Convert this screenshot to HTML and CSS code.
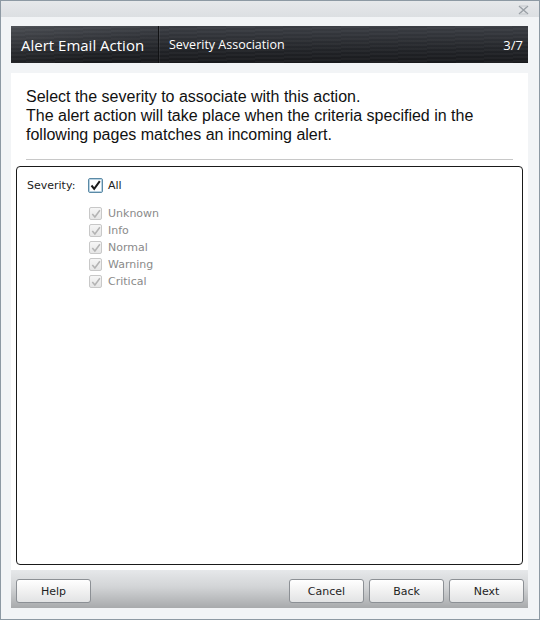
FILE: index.html
```html
<!DOCTYPE html>
<html lang="en">
<head>
    <meta charset="UTF-8">
    <title>Alert Email Action</title>
    <link rel="stylesheet" href="styles.css">
</head>
<body>
    <div class="window">
        <div class="titlebar">
            <svg class="close" width="11" height="10" viewBox="0 0 11 10">
                <path d="M1 1 L10 9 M10 1 L1 9" stroke="#9aa0a6" stroke-width="1.4" fill="none"/>
                <path d="M2 1 L9 1 M2 9 L9 9" stroke="#c4c8cc" stroke-width="1" fill="none"/>
            </svg>
        </div>

        <div class="frame">
            <div class="header">
                <div class="header-title">Alert Email Action</div>
                <div class="header-step">Severity Association</div>
                <div class="header-count">3/7</div>
            </div>

            <div class="panel">
                <p class="intro">
                    Select the severity to associate with this action.<br>
                    The alert action will take place when the criteria specified in the
                    following pages matches an incoming alert.
                </p>
                <div class="separator"></div>

                <div class="box">
                    <div class="severity-row">
                        <span class="field-label">Severity:</span>
                        <div class="options">
                            <label class="check main">
                                <span class="box-check focused">
                                    <svg width="11" height="11" viewBox="0 0 11 11"><path d="M1.5 5.5 L4.2 8.8 L9.8 1.2" stroke="#1b1b1b" stroke-width="2" fill="none"/></svg>
                                </span>
                                All
                            </label>
                            <div class="sub-list">
                                <label class="check disabled"><span class="box-check"><svg width="10" height="10" viewBox="0 0 10 10"><path d="M1.3 5 L3.9 8 L8.9 1.2" stroke="#b4b4b4" stroke-width="1.6" fill="none"/></svg></span>Unknown</label>
                                <label class="check disabled"><span class="box-check"><svg width="10" height="10" viewBox="0 0 10 10"><path d="M1.3 5 L3.9 8 L8.9 1.2" stroke="#b4b4b4" stroke-width="1.6" fill="none"/></svg></span>Info</label>
                                <label class="check disabled"><span class="box-check"><svg width="10" height="10" viewBox="0 0 10 10"><path d="M1.3 5 L3.9 8 L8.9 1.2" stroke="#b4b4b4" stroke-width="1.6" fill="none"/></svg></span>Normal</label>
                                <label class="check disabled"><span class="box-check"><svg width="10" height="10" viewBox="0 0 10 10"><path d="M1.3 5 L3.9 8 L8.9 1.2" stroke="#b4b4b4" stroke-width="1.6" fill="none"/></svg></span>Warning</label>
                                <label class="check disabled"><span class="box-check"><svg width="10" height="10" viewBox="0 0 10 10"><path d="M1.3 5 L3.9 8 L8.9 1.2" stroke="#b4b4b4" stroke-width="1.6" fill="none"/></svg></span>Critical</label>
                            </div>
                        </div>
                    </div>
                </div>
            </div>

            <div class="footer">
                <button class="btn">Help</button>
                <div class="footer-right">
                    <button class="btn">Cancel</button>
                    <button class="btn">Back</button>
                    <button class="btn">Next</button>
                </div>
            </div>
        </div>
    </div>
</body>
</html>
```

FILE: styles.css
```css
* {
    box-sizing: border-box;
}

body {
    margin: 0;
    background: #ffffff;
    font-family: 'DejaVu Sans', sans-serif;
}

.window {
    width: 540px;
    height: 620px;
    border: 1px solid #8d99a3;
    background: #f2f4f6;
    display: flex;
    flex-direction: column;
}

.titlebar {
    height: 16px;
    background: linear-gradient(#e6e8ea, #dcdfe2);
    display: flex;
    justify-content: flex-end;
    align-items: center;
    padding-right: 10px;
}

.close {
    display: block;
    margin-top: 1px;
}

.frame {
    flex: 1;
    padding: 9px 11px 11px 10px;
    display: flex;
    flex-direction: column;
}

.header {
    height: 37px;
    display: flex;
    align-items: center;
    color: #ffffff;
    background:
        linear-gradient(160deg, rgba(255,255,255,0.08) 0%, rgba(255,255,255,0) 28%),
        repeating-linear-gradient(178deg, rgba(255,255,255,0.03) 0 2px, rgba(0,0,0,0) 2px 4px),
        linear-gradient(#3b3e44, #202226 70%, #18191c);
}

.header-title {
    font-family: 'Open Sans', sans-serif;
    font-size: 15px;
    padding: 0 11px 0 10px;
    height: 100%;
    width: 148px;
    display: flex;
    align-items: center;
    border-right: 1px solid #111214;
    box-shadow: 1px 0 0 rgba(255,255,255,0.08);
    white-space: nowrap;
}

.header-step {
    font-family: 'Open Sans', sans-serif;
    font-size: 12.5px;
    padding-left: 10px;
    flex: 1;
}

.header-count {
    font-family: 'Open Sans', sans-serif;
    font-size: 13px;
    padding-right: 5px;
}

.panel {
    flex: 1;
    margin-top: 10px;
    background: #ffffff;
    display: flex;
    flex-direction: column;
    padding: 0 5px 5px;
}

.intro {
    font-family: 'Liberation Sans', sans-serif;
    font-size: 16px;
    line-height: 19px;
    color: #111111;
    margin: 14px 10px 0;
}

.separator {
    height: 1px;
    background: #c8c8c8;
    margin: 15px 10px 6px;
}

.box {
    flex: 1;
    border: 1px solid #1a1a1a;
    border-radius: 4px;
    padding: 10px 10px;
}

.severity-row {
    display: flex;
    font-size: 11px;
    color: #222222;
}

.field-label {
    width: 61px;
    padding-top: 2px;
}

.options {
    display: flex;
    flex-direction: column;
}

.check {
    display: flex;
    align-items: center;
    gap: 5px;
    height: 17px;
}

.check.main {
    height: 16px;
    margin-bottom: 12px;
}

.check.disabled {
    color: #8a8a8a;
    padding-left: 1px;
    gap: 6px;
}

.box-check {
    width: 13px;
    height: 13px;
    border: 1px solid #c8c8c8;
    background: linear-gradient(#f6f6f6, #e6e6e6);
    border-radius: 2px;
    display: flex;
    align-items: center;
    justify-content: center;
}

.box-check.focused {
    width: 15px;
    height: 15px;
    border: 1px solid #5b8aa6;
    background: #ffffff;
    box-shadow: inset 0 0 0 1px #b9d3e3;
}

.footer {
    height: 38px;
    background: linear-gradient(#e6e8ea, #d2d4d6 45%, #a8aaac);
    display: flex;
    justify-content: space-between;
    padding: 9px 4px 0 5px;
}

.footer-right {
    display: flex;
    gap: 5px;
}

.btn {
    width: 75px;
    height: 24px;
    font-family: 'DejaVu Sans', sans-serif;
    font-size: 11px;
    color: #1e1e1e;
    border: 1px solid #8c9095;
    border-radius: 3px;
    background: linear-gradient(#ffffff, #f1f1f1 50%, #e2e3e4);
    padding: 0;
}
```
